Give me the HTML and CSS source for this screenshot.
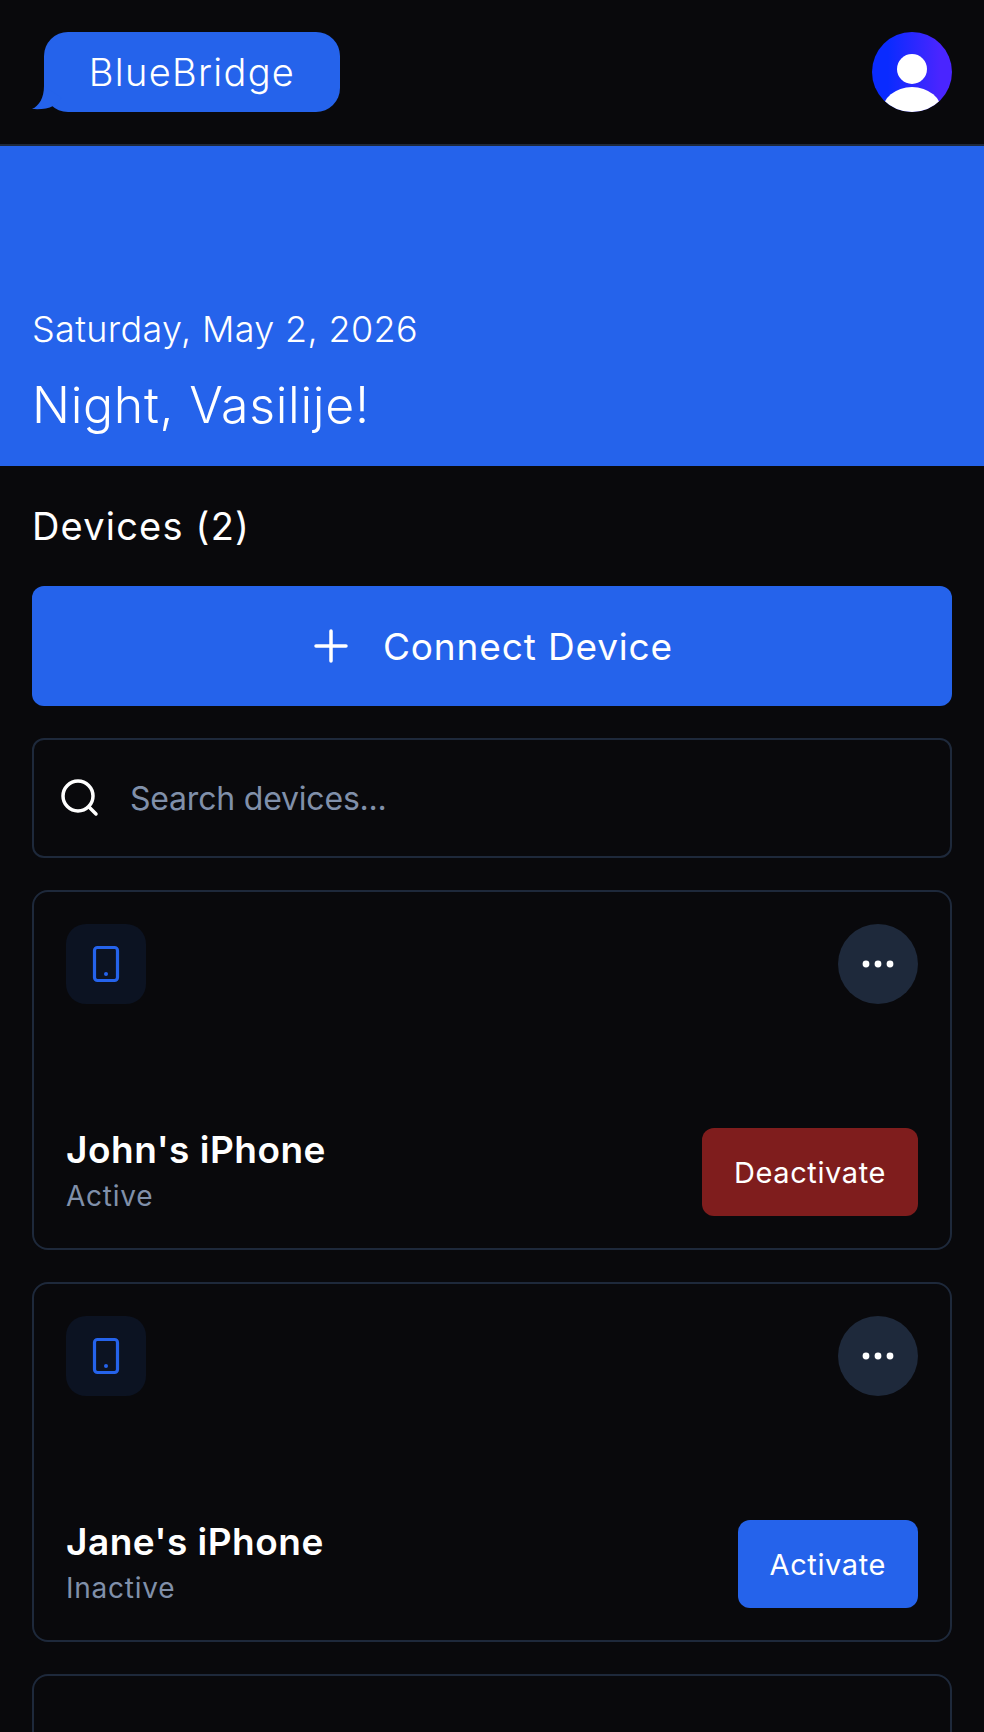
FILE: index.html
```html
<!DOCTYPE html>
<html lang="en">
<head>
  <meta charset="UTF-8">
  <meta name="viewport" content="width=device-width, initial-scale=1.0">
  <title>BlueBridge</title>
  <link rel="stylesheet" href="styles.css">
</head>
<body>
  <header class="topbar">
    <div class="logo">
      <svg class="logo-tail" width="32" height="28" viewBox="0 0 32 28">
        <path d="M12 2 C12 14 7 22 0 25 C8 25.5 16 25 21 22 L30 14 Z" fill="#2563eb"/>
      </svg>
      <span>BlueBridge</span>
    </div>
    <svg class="avatar" width="80" height="80" viewBox="0 0 80 80">
      <defs>
        <linearGradient id="avatarFill" x1="0" y1="0" x2="1" y2="0">
          <stop offset="0.2" stop-color="#0a2bff"/>
          <stop offset="0.85" stop-color="#4a25ff"/>
        </linearGradient>
        <clipPath id="avatarClip"><circle cx="40" cy="40" r="40"/></clipPath>
      </defs>
      <circle cx="40" cy="40" r="40" fill="url(#avatarFill)"/>
      <circle cx="40" cy="37" r="15" fill="#fff"/>
      <ellipse cx="40" cy="80" rx="30" ry="25" fill="#fff" clip-path="url(#avatarClip)"/>
    </svg>
  </header>

  <section class="hero">
    <p class="hero-date">Saturday, May 2, 2026</p>
    <h1 class="hero-greeting">Night, Vasilije!</h1>
  </section>

  <main class="content">
    <h2 class="section-title">Devices (2)</h2>

    <button class="connect-btn">
      <svg width="40" height="40" viewBox="0 0 40 40" fill="none" stroke="#fff" stroke-width="3.5" stroke-linecap="round">
        <path d="M5 20 H35 M20 5 V35"/>
      </svg>
      <span>Connect Device</span>
    </button>

    <label class="search">
      <svg width="40" height="40" viewBox="0 0 40 40" fill="none" stroke="#fff" stroke-width="3.5" stroke-linecap="round">
        <circle cx="18" cy="18" r="15"/>
        <path d="M29 29 L36 36"/>
      </svg>
      <input type="text" placeholder="Search devices...">
    </label>

    <article class="card">
      <div class="card-top">
        <div class="device-icon">
          <svg width="48" height="48" viewBox="0 0 48 48" fill="none" stroke="#2563eb" stroke-width="3.2">
            <rect x="12.5" y="7.5" width="23" height="33" rx="3"/>
            <circle cx="24" cy="34" r="2" fill="#2563eb" stroke="none"/>
          </svg>
        </div>
        <button class="more-btn">
          <svg width="32" height="8" viewBox="0 0 32 8" fill="#fff">
            <circle cx="4" cy="4" r="3.4"/>
            <circle cx="16" cy="4" r="3.4"/>
            <circle cx="28" cy="4" r="3.4"/>
          </svg>
        </button>
      </div>
      <div class="card-bottom">
        <div>
          <h3 class="device-name">John's iPhone</h3>
          <p class="device-status">Active</p>
        </div>
        <button class="action-btn deactivate">Deactivate</button>
      </div>
    </article>

    <article class="card">
      <div class="card-top">
        <div class="device-icon">
          <svg width="48" height="48" viewBox="0 0 48 48" fill="none" stroke="#2563eb" stroke-width="3.2">
            <rect x="12.5" y="7.5" width="23" height="33" rx="3"/>
            <circle cx="24" cy="34" r="2" fill="#2563eb" stroke="none"/>
          </svg>
        </div>
        <button class="more-btn">
          <svg width="32" height="8" viewBox="0 0 32 8" fill="#fff">
            <circle cx="4" cy="4" r="3.4"/>
            <circle cx="16" cy="4" r="3.4"/>
            <circle cx="28" cy="4" r="3.4"/>
          </svg>
        </button>
      </div>
      <div class="card-bottom">
        <div>
          <h3 class="device-name">Jane's iPhone</h3>
          <p class="device-status">Inactive</p>
        </div>
        <button class="action-btn activate">Activate</button>
      </div>
    </article>

    <article class="card card-empty"></article>
  </main>
</body>
</html>
```

FILE: styles.css
```css
* {
  box-sizing: border-box;
}

body {
  margin: 0;
  height: 100vh;
  overflow: hidden;
  background: #09090c;
  color: #fff;
  font-family: 'Inter', 'Open Sans', sans-serif;
}

button,
input {
  font-family: inherit;
  color: inherit;
  border: none;
}

.topbar {
  display: flex;
  justify-content: space-between;
  align-items: center;
  height: 146px;
  padding: 0 32px;
  border-bottom: 2px solid #1e293b;
}

.logo {
  position: relative;
  display: flex;
  align-items: center;
  justify-content: center;
  width: 296px;
  height: 80px;
  margin-left: 12px;
  border-radius: 24px;
  background: #2563eb;
  font-size: 38px;
  font-weight: 300;
  letter-spacing: 1.3px;
}

.logo-tail {
  position: absolute;
  left: -12px;
  top: 52px;
}

.hero {
  display: flex;
  flex-direction: column;
  justify-content: flex-end;
  height: 320px;
  padding: 0 32px 30px;
  background: #2563eb;
}

.hero-date {
  margin: 0 0 23px;
  font-size: 36px;
  line-height: 44px;
  font-weight: 300;
  letter-spacing: 0.35px;
}

.hero-greeting {
  margin: 0;
  font-size: 50px;
  line-height: 62px;
  font-weight: 300;
  letter-spacing: 0.7px;
}

.content {
  display: flex;
  flex-direction: column;
  padding: 36px 32px 0;
}

.section-title {
  margin: 0 0 36px;
  font-size: 38px;
  line-height: 48px;
  font-weight: 400;
  letter-spacing: 1.2px;
}

.connect-btn {
  display: flex;
  align-items: center;
  justify-content: center;
  gap: 32px;
  height: 120px;
  border-radius: 12px;
  background: #2563eb;
  font-size: 37px;
  font-weight: 400;
  letter-spacing: 0.85px;
}

.search {
  display: flex;
  align-items: center;
  gap: 28px;
  height: 120px;
  margin-top: 32px;
  padding: 0 26px;
  border: 2px solid #1e293b;
  border-radius: 12px;
}

.search input {
  flex: 1;
  background: none;
  outline: none;
  font-size: 32px;
  font-weight: 400;
  letter-spacing: -0.2px;
}

.search input::placeholder {
  color: #8090aa;
  opacity: 1;
}

.card {
  display: flex;
  flex-direction: column;
  gap: 124px;
  margin-top: 32px;
  padding: 32px;
  border: 2px solid #1e293b;
  border-radius: 16px;
}

.card-empty {
  height: 360px;
}

.card-top,
.card-bottom {
  display: flex;
  justify-content: space-between;
  align-items: center;
}

.device-icon {
  display: flex;
  align-items: center;
  justify-content: center;
  width: 80px;
  height: 80px;
  border-radius: 20px;
  background: #0c1322;
}

.more-btn {
  display: flex;
  align-items: center;
  justify-content: center;
  width: 80px;
  height: 80px;
  padding: 0;
  border-radius: 50%;
  background: #1e293b;
}

.device-name {
  margin: 0;
  font-size: 37px;
  line-height: 44px;
  font-weight: 600;
  letter-spacing: 0.5px;
}

.device-status {
  margin: 4px 0 0;
  font-size: 28px;
  line-height: 40px;
  font-weight: 400;
  letter-spacing: 0.75px;
  color: #8090aa;
}

.action-btn {
  height: 88px;
  padding: 0 32px;
  border-radius: 12px;
  font-size: 29px;
  font-weight: 400;
  letter-spacing: 0.6px;
}

.deactivate {
  background: #7f1d1d;
}

.activate {
  background: #2563eb;
}
```
